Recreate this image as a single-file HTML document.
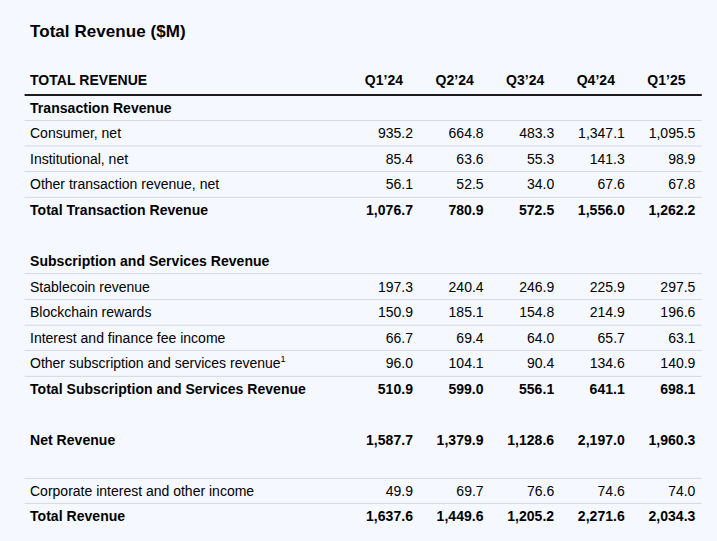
<!DOCTYPE html>
<html lang="en"><head><meta charset="utf-8"><title>Total Revenue ($M)</title>
<style>
html,body{margin:0;padding:0;}
body{width:717px;height:541px;background:#f5f8fe;position:relative;overflow:hidden;
font-family:"Liberation Sans",Arial,sans-serif;font-size:14px;color:#000;}
.t{position:absolute;white-space:nowrap;line-height:16px;height:16px;}
.b{font-weight:bold;letter-spacing:0.04px;}
.r{text-align:right;}
h1{position:absolute;left:30px;top:22px;margin:0;font-size:17px;letter-spacing:0.06px;line-height:20px;font-weight:bold;color:#000;}
sup{font-size:9px;vertical-align:baseline;position:relative;top:-6.5px;line-height:0;}
</style></head><body>
<h1>Total Revenue ($M)</h1>
<div class="t b" style="left:30px;top:72px">TOTAL REVENUE</div>
<div class="t b r" style="right:313.8px;top:72px">Q1’24</div>
<div class="t b r" style="right:243.2px;top:72px">Q2’24</div>
<div class="t b r" style="right:172.6px;top:72px">Q3’24</div>
<div class="t b r" style="right:102.0px;top:72px">Q4’24</div>
<div class="t b r" style="right:31.4px;top:72px">Q1’25</div>
<div class="t b" style="left:30px;top:100.0px">Transaction Revenue</div>
<div class="t" style="left:30px;top:125.0px">Consumer, net</div>
<div class="t r" style="right:304.0px;top:125.0px">935.2</div>
<div class="t r" style="right:233.4px;top:125.0px">664.8</div>
<div class="t r" style="right:162.8px;top:125.0px">483.3</div>
<div class="t r" style="right:92.2px;top:125.0px">1,347.1</div>
<div class="t r" style="right:21.6px;top:125.0px">1,095.5</div>
<div class="t" style="left:30px;top:151.0px">Institutional, net</div>
<div class="t r" style="right:304.0px;top:151.0px">85.4</div>
<div class="t r" style="right:233.4px;top:151.0px">63.6</div>
<div class="t r" style="right:162.8px;top:151.0px">55.3</div>
<div class="t r" style="right:92.2px;top:151.0px">141.3</div>
<div class="t r" style="right:21.6px;top:151.0px">98.9</div>
<div class="t" style="left:30px;top:176.0px">Other transaction revenue, net</div>
<div class="t r" style="right:304.0px;top:176.0px">56.1</div>
<div class="t r" style="right:233.4px;top:176.0px">52.5</div>
<div class="t r" style="right:162.8px;top:176.0px">34.0</div>
<div class="t r" style="right:92.2px;top:176.0px">67.6</div>
<div class="t r" style="right:21.6px;top:176.0px">67.8</div>
<div class="t b" style="left:30px;top:202.0px">Total Transaction Revenue</div>
<div class="t b r" style="right:304.0px;top:202.0px">1,076.7</div>
<div class="t b r" style="right:233.4px;top:202.0px">780.9</div>
<div class="t b r" style="right:162.8px;top:202.0px">572.5</div>
<div class="t b r" style="right:92.2px;top:202.0px">1,556.0</div>
<div class="t b r" style="right:21.6px;top:202.0px">1,262.2</div>
<div class="t b" style="left:30px;top:253.0px">Subscription and Services Revenue</div>
<div class="t" style="left:30px;top:279.0px">Stablecoin revenue</div>
<div class="t r" style="right:304.0px;top:279.0px">197.3</div>
<div class="t r" style="right:233.4px;top:279.0px">240.4</div>
<div class="t r" style="right:162.8px;top:279.0px">246.9</div>
<div class="t r" style="right:92.2px;top:279.0px">225.9</div>
<div class="t r" style="right:21.6px;top:279.0px">297.5</div>
<div class="t" style="left:30px;top:304.0px">Blockchain rewards</div>
<div class="t r" style="right:304.0px;top:304.0px">150.9</div>
<div class="t r" style="right:233.4px;top:304.0px">185.1</div>
<div class="t r" style="right:162.8px;top:304.0px">154.8</div>
<div class="t r" style="right:92.2px;top:304.0px">214.9</div>
<div class="t r" style="right:21.6px;top:304.0px">196.6</div>
<div class="t" style="left:30px;top:330.0px">Interest and finance fee income</div>
<div class="t r" style="right:304.0px;top:330.0px">66.7</div>
<div class="t r" style="right:233.4px;top:330.0px">69.4</div>
<div class="t r" style="right:162.8px;top:330.0px">64.0</div>
<div class="t r" style="right:92.2px;top:330.0px">65.7</div>
<div class="t r" style="right:21.6px;top:330.0px">63.1</div>
<div class="t" style="left:30px;top:355.0px">Other subscription and services revenue<sup>1</sup></div>
<div class="t r" style="right:304.0px;top:355.0px">96.0</div>
<div class="t r" style="right:233.4px;top:355.0px">104.1</div>
<div class="t r" style="right:162.8px;top:355.0px">90.4</div>
<div class="t r" style="right:92.2px;top:355.0px">134.6</div>
<div class="t r" style="right:21.6px;top:355.0px">140.9</div>
<div class="t b" style="left:30px;top:381.0px">Total Subscription and Services Revenue</div>
<div class="t b r" style="right:304.0px;top:381.0px">510.9</div>
<div class="t b r" style="right:233.4px;top:381.0px">599.0</div>
<div class="t b r" style="right:162.8px;top:381.0px">556.1</div>
<div class="t b r" style="right:92.2px;top:381.0px">641.1</div>
<div class="t b r" style="right:21.6px;top:381.0px">698.1</div>
<div class="t b" style="left:30px;top:432.0px">Net Revenue</div>
<div class="t b r" style="right:304.0px;top:432.0px">1,587.7</div>
<div class="t b r" style="right:233.4px;top:432.0px">1,379.9</div>
<div class="t b r" style="right:162.8px;top:432.0px">1,128.6</div>
<div class="t b r" style="right:92.2px;top:432.0px">2,197.0</div>
<div class="t b r" style="right:21.6px;top:432.0px">1,960.3</div>
<div class="t" style="left:30px;top:483.0px">Corporate interest and other income</div>
<div class="t r" style="right:304.0px;top:483.0px">49.9</div>
<div class="t r" style="right:233.4px;top:483.0px">69.7</div>
<div class="t r" style="right:162.8px;top:483.0px">76.6</div>
<div class="t r" style="right:92.2px;top:483.0px">74.6</div>
<div class="t r" style="right:21.6px;top:483.0px">74.0</div>
<div class="t b" style="left:30px;top:508.0px">Total Revenue</div>
<div class="t b r" style="right:304.0px;top:508.0px">1,637.6</div>
<div class="t b r" style="right:233.4px;top:508.0px">1,449.6</div>
<div class="t b r" style="right:162.8px;top:508.0px">1,205.2</div>
<div class="t b r" style="right:92.2px;top:508.0px">2,271.6</div>
<div class="t b r" style="right:21.6px;top:508.0px">2,034.3</div>
<svg style="position:absolute;left:0;top:0" width="717" height="541" viewBox="0 0 717 541"><line x1="24.6" x2="701.8" y1="95.05" y2="95.05" stroke="#1c1c1c" stroke-width="2"/><line x1="24.6" x2="701.8" y1="120.50" y2="120.50" stroke="#d6d9de" stroke-width="1"/><line x1="24.6" x2="701.8" y1="146.00" y2="146.00" stroke="#d6d9de" stroke-width="1"/><line x1="24.6" x2="701.8" y1="171.50" y2="171.50" stroke="#d6d9de" stroke-width="1"/><line x1="24.6" x2="701.8" y1="197.30" y2="197.30" stroke="#d6d9de" stroke-width="1"/><line x1="24.6" x2="701.8" y1="273.60" y2="273.60" stroke="#d6d9de" stroke-width="1"/><line x1="24.6" x2="701.8" y1="299.45" y2="299.45" stroke="#d6d9de" stroke-width="1"/><line x1="24.6" x2="701.8" y1="325.20" y2="325.20" stroke="#d6d9de" stroke-width="1"/><line x1="24.6" x2="701.8" y1="350.45" y2="350.45" stroke="#d6d9de" stroke-width="1"/><line x1="24.6" x2="701.8" y1="376.40" y2="376.40" stroke="#d6d9de" stroke-width="1"/><line x1="24.6" x2="701.8" y1="478.40" y2="478.40" stroke="#d6d9de" stroke-width="1"/><line x1="24.6" x2="701.8" y1="503.40" y2="503.40" stroke="#d6d9de" stroke-width="1"/></svg>
</body></html>
